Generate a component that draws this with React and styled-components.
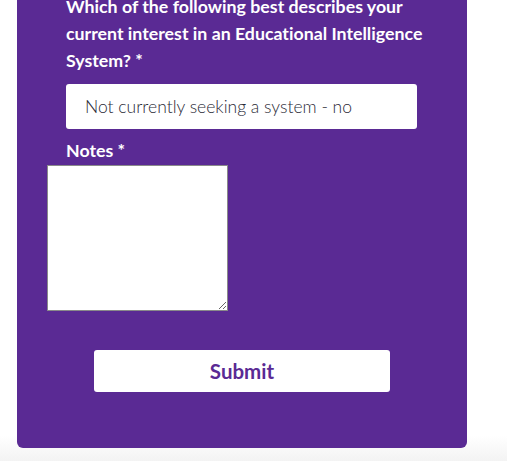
import React from 'react';
import styled, { createGlobalStyle } from 'styled-components';

const GlobalStyle = createGlobalStyle`
  html, body {
    margin: 0;
    padding: 0;
    background: #fff;
  }
  body {
    font-family: Lato, "Liberation Sans", sans-serif;
    font-variant-ligatures: none;
  }
`;

// --- Layout ---
const Page = styled.div`
  min-height: 461px;
  overflow: hidden;
  background: linear-gradient(to bottom, #fff 0, #fff 436px, #f3f3f3 461px);
`;

const Panel = styled.form`
  width: 450px;
  box-sizing: border-box;
  margin: -7px 0 0 17px;
  padding: 0 40px 56px 49px;
  background: #5a2a94;
  border-radius: 0 0 6px 6px;
`;

const Label = styled.label`
  display: block;
  color: #fff;
  font-size: 17.75px;
  font-weight: 700;
  line-height: 27px;
  margin-top: ${p => p.$top || 0}px;
`;

const SelectBox = styled.select`
  display: block;
  appearance: none;
  -webkit-appearance: none;
  width: 351px;
  height: 45px;
  margin-top: 10px;
  padding: 0 0 0 19px;
  border: none;
  border-radius: 3px;
  background: #fff;
  color: #2a2a36;
  font-family: Lato, "Liberation Sans", sans-serif;
  font-variant-ligatures: none;
  font-size: 17.5px;
  font-weight: 300;
  outline: none;
`;

const Notes = styled.textarea`
  display: block;
  box-sizing: border-box;
  width: 181px;
  height: 146px;
  margin: 1px 0 0 -19px;
  border: 1px solid #8a8a8a;
  border-radius: 0;
  background: #fff;
  padding: 2px;
`;

// spans the whole panel so the button sits in its centre
const ButtonRow = styled.div`
  display: flex;
  justify-content: center;
  margin: 39px -40px 0 -49px;
`;

const SubmitButton = styled.button`
  width: 296px;
  height: 42px;
  border: none;
  border-radius: 3px;
  background: #fff;
  color: #5a2a94;
  font-family: Lato, "Liberation Sans", sans-serif;
  font-size: 20.5px;
  font-weight: 700;
  cursor: pointer;
`;

const App = () => (
  <Page>
    <GlobalStyle />
    <Panel onSubmit={e => e.preventDefault()}>
      <Label>
        Which of the following best describes your current interest in an Educational Intelligence System? *
      </Label>
      <SelectBox defaultValue="no">
        <option value="no">Not currently seeking a system - no</option>
      </SelectBox>
      <Label $top={8}>Notes *</Label>
      <Notes />
      <ButtonRow>
        <SubmitButton type="submit">Submit</SubmitButton>
      </ButtonRow>
    </Panel>
  </Page>
);

export default App;
